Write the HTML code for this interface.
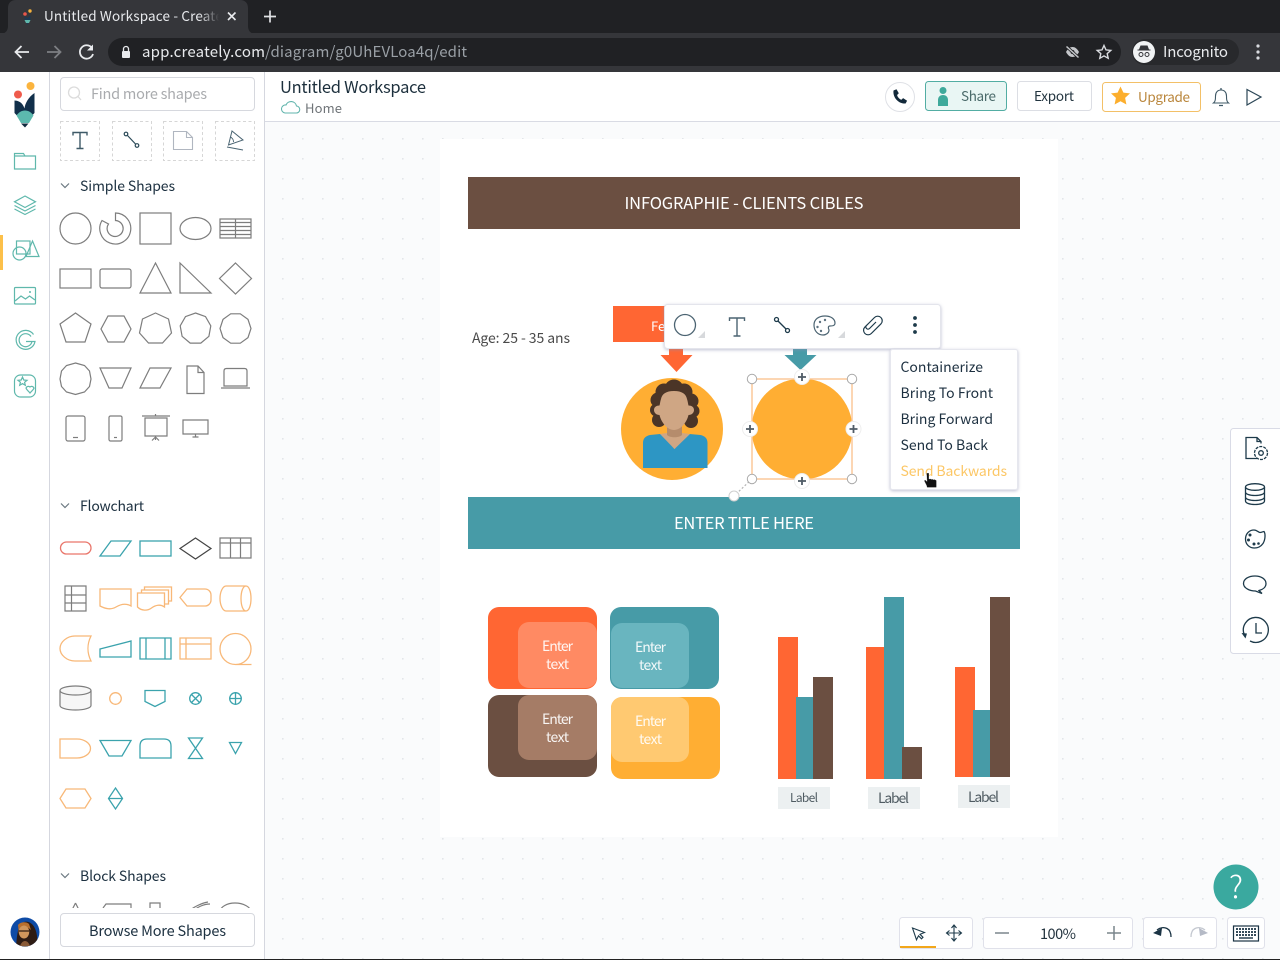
<!DOCTYPE html>
<html><head><meta charset="utf-8"><title>Untitled Workspace - Creately</title>
<style>
html,body{margin:0;padding:0;width:1280px;height:960px;overflow:hidden;background:#fff}
svg{display:block}
text{font-family:"Noto Sans CJK JP","Liberation Sans",sans-serif;}
.g{fill:none;stroke:#7d7d7d;stroke-width:1.2}
.o{fill:none;stroke:#f8b878;stroke-width:1.3}
.b{fill:none;stroke:#3ba3ad;stroke-width:1.3}
.n{fill:none;stroke:#2b4a58;stroke-width:1.2}
.m{fill:none;stroke:#5fb8ac;stroke-width:1.2}
.d{fill:none;stroke:#1d3a4a;stroke-width:1.3}
.menu{font-size:14px;fill:#1d3040}
</style></head><body>
<svg width="1280" height="960" viewBox="0 0 1280 960" xmlns="http://www.w3.org/2000/svg">
<defs>
<pattern id="dots" x="262" y="138" width="20" height="20" patternUnits="userSpaceOnUse"><rect x="0" y="0" width="1.6" height="1.6" fill="#e3e6e9"/></pattern>
<linearGradient id="fade" x1="0" x2="1" y1="0" y2="0"><stop offset="0" stop-color="#35363a" stop-opacity="0"/><stop offset="1" stop-color="#35363a"/></linearGradient>
<clipPath id="blockclip"><rect x="55" y="895" width="205" height="13"/></clipPath>
<clipPath id="feclip"><rect x="613" y="306" width="51" height="36"/></clipPath>
<clipPath id="avclip"><circle cx="25" cy="932" r="14.5"/></clipPath>
<filter id="sh" x="-10%" y="-10%" width="120%" height="125%"><feDropShadow dx="0" dy="1" stdDeviation="1.5" flood-color="#8a8fb0" flood-opacity=".55"/></filter>
</defs>

<!-- canvas -->
<rect x="265" y="122" width="1015" height="838" fill="#fafbfc"/>
<rect x="265" y="122" width="1015" height="838" fill="url(#dots)"/>
<rect x="440" y="139" width="618" height="698" fill="#fff"/>

<!-- browser chrome -->
<rect width="1280" height="34" fill="#202124"/>
<path d="M0 34C5 34 8 31 8 26V8C8 3 11 0 16 0H240C245 0 248 3 248 8V26C248 31 251 34 256 34Z" fill="#35363a"/>
<rect y="33" width="1280" height="39" fill="#35363a"/>
<circle cx="25" cy="14" r="1.8" fill="#e8574a"/><circle cx="30" cy="11" r="1.7" fill="#f5b13d"/>
<path d="M24.500 16l3 2 3-3v5h-6z" fill="#1c3a52"/><path d="M24.500 20h6l-1.500 3h-3z" fill="#5fb8ac"/><path d="M26.500 23h2l-1 2z" fill="#1c3a52"/>
<text x="44" y="21" font-size="13.5" fill="#e8eaed" textLength="190">Untitled Workspace - Creately</text>
<rect x="200" y="6" width="19" height="20" fill="url(#fade)"/><rect x="219" y="6" width="22" height="20" fill="#35363a"/>
<path d="M228 12.500l7.500 7.500M235.500 12.500l-7.500 7.500" stroke="#e8eaed" stroke-width="1.600"/>
<path d="M270 10.500v12M264 16.500h12" stroke="#e0e2e5" stroke-width="1.700"/>
<path d="M29 52H16M21.500 46l-6 6 6 6" fill="none" stroke="#e8eaed" stroke-width="1.800"/>
<path d="M47 52H60M54.500 46l6 6-6 6" fill="none" stroke="#7d7f83" stroke-width="1.800"/>
<path d="M92 48A6.700 6.700 0 1 0 93 54" fill="none" stroke="#e8eaed" stroke-width="1.800"/><path d="M93 44.500v6h-6z" fill="#e8eaed"/>
<rect x="108" y="38" width="1013" height="28" rx="14" fill="#202124"/>
<rect x="122" y="51" width="8" height="7" rx="1" fill="#e8eaed"/><path d="M123.500 51v-2a2.500 2.500 0 0 1 5 0v2" fill="none" stroke="#e8eaed" stroke-width="1.300"/>
<text x="142" y="57" font-size="15" fill="#e8eaed" textLength="123">app.creately.com</text>
<text x="265" y="57" font-size="15" fill="#9aa0a6" textLength="202">/diagram/g0UhEVLoa4q/edit</text>
<path d="M1066 52c2-3.500 4-5 6.500-5s4.500 1.500 6.500 5c-2 3.500-4 5-6.500 5s-4.500-1.500-6.500-5z" fill="#c5c7ca"/><circle cx="1072.500" cy="52" r="2" fill="#202124"/><path d="M1066.500 46.500l12 11" stroke="#202124" stroke-width="3"/><path d="M1066.500 46.500l12 11" stroke="#c5c7ca" stroke-width="1.500"/>
<path d="M1104 45.500l2 4.400 4.800.5-3.600 3.200 1 4.700-4.200-2.400-4.200 2.400 1-4.700-3.600-3.200 4.800-.5z" fill="none" stroke="#dadce0" stroke-width="1.400"/>
<rect x="1132" y="39" width="107" height="26" rx="13" fill="#28292c"/>
<circle cx="1144" cy="52" r="11" fill="#f1f3f4"/>
<path d="M1139 49.500l1.500-4h7l1.500 4z M1137.500 49.500h13v1h-13z" fill="#35363a"/><circle cx="1141" cy="54.500" r="2" fill="none" stroke="#35363a" stroke-width="1"/><circle cx="1147" cy="54.500" r="2" fill="none" stroke="#35363a" stroke-width="1"/>
<text x="1163" y="57" font-size="15" fill="#e8eaed" textLength="65">Incognito</text>
<circle cx="1258" cy="46" r="1.600" fill="#dadce0"/><circle cx="1258" cy="52" r="1.600" fill="#dadce0"/><circle cx="1258" cy="58" r="1.600" fill="#dadce0"/>

<!-- app header -->
<rect x="0" y="72" width="1280" height="50" fill="#fff"/>
<rect x="265" y="121" width="1015" height="1" fill="#d9dbe4"/>
<text x="280" y="93" font-size="16.500" fill="#1c2f3c" textLength="146">Untitled Workspace</text>
<path d="M285 113h11a3.500 3.500 0 0 0 .5-7 5.500 5.500 0 0 0-10.500-1 4 4 0 0 0-1 8z" fill="none" stroke="#62b5ad" stroke-width="1.100"/>
<text x="305" y="113" font-size="13" fill="#6f7478" textLength="37">Home</text>
<circle cx="900" cy="97" r="14.500" fill="#fff" stroke="#dfe1e6"/>
<path d="M893.500 90.500l3-1.200 2.300 4-1.700 1.700c.5 2.200 2.200 4 4.300 4.800l1.700-1.700 4 2.600-1.500 2.800c-7 .6-13-6-12.100-13z" fill="#12293a"/>
<rect x="925.500" y="81.500" width="81" height="29" rx="3" fill="#e9f6f4" stroke="#52ada3"/>
<circle cx="943" cy="90.500" r="3.500" fill="#3ea99b"/><path d="M938 106v-6c0-3 2-5 5-5s5 2 5 5v6z" fill="#3ea99b"/>
<text x="961" y="101" font-size="13.500" fill="#4a6a6a" textLength="35">Share</text>
<rect x="1017.500" y="81.500" width="74" height="29" rx="3" fill="#fff" stroke="#dcdee4"/>
<text x="1034" y="101" font-size="13.500" fill="#22343f" textLength="40">Export</text>
<rect x="1102.500" y="82.500" width="98" height="29" rx="3" fill="#fff" stroke="#f3c067"/>
<path d="M1120.500 86.500l2.900 6.100 6.600.8-4.900 4.500 1.300 6.600-5.900-3.300-5.900 3.300 1.300-6.600-4.900-4.500 6.600-.8z" fill="#fcae2d"/>
<text x="1138" y="102" font-size="13.500" fill="#b9853a" textLength="52">Upgrade</text>
<path d="M1213.500 103c2-1.500 2-4 2-7 0-3.500 2-6 5.500-6s5.500 2.500 5.500 6c0 3 0 5.500 2 7z" fill="none" stroke="#3e5866" stroke-width="1.100"/><path d="M1219 105.500h4M1221 88v2" stroke="#3e5866" stroke-width="1.300"/>
<path d="M1247 89.500l14 7.500-14 8z" fill="none" stroke="#2b4656" stroke-width="1.200"/>

<!-- left rail -->
<rect x="0" y="72" width="49" height="888" fill="#fff"/><rect x="49" y="72" width="1" height="888" fill="#d5d7df"/>
<rect x="50" y="72" width="214" height="888" fill="#fff"/><rect x="264" y="72" width="1" height="888" fill="#d5d7df"/>
<circle cx="30.500" cy="86" r="4" fill="#fbb43e"/><circle cx="18" cy="94.500" r="4" fill="#ef5b4c"/>
<path d="M14.500 100.500c3 0 6.500 1.500 8 4 .8 1.200 1.500 2.500 2 4 .5-5 4-11.500 10-15.500v20l-3 3h-14l-3-3z" fill="#112f4a"/>
<path d="M16.500 115.500c2-3 5-5 8.500-5s6.500 2 8.500 5l-4.500 7.500h-8z" fill="#5cb9ae"/><path d="M21 123.500h7.500L25 127.500z" fill="#102a3e"/>
<rect x="0" y="235" width="3" height="35" fill="#fcc04a"/>
<!-- rail icons -->
<path d="M14.500 169v-15.500h9l1.500 2.500h10.500v13z M14.500 156h10.500" class="m"/>
<path d="M25 196l10.500 5.800L25 207.500 14.500 201.800z M14.500 205.500l10.500 5.500 10.500-5.500 M14.500 209l10.500 5.500 10.500-5.500" class="m"/>
<rect x="16.500" y="241" width="13.500" height="13" class="m"/><circle cx="19.500" cy="253.500" r="6.500" fill="#fff" class="m"/><path d="M32.500 241l6.500 15.500h-13z" fill="#fff" class="m"/>
<rect x="14.500" y="287.500" width="21" height="16.500" rx="1" class="m"/><path d="M15 301l6-5 4.500 3 4-3 5.500 4" class="m"/><circle cx="30" cy="292" r="1" fill="#5fb8ac"/>
<path d="M33.500 334.500a9.500 9.500 0 1 0 1.500 7h-9M31 336.500a6.500 6.500 0 1 0 1 5" class="m"/>
<rect x="14.500" y="375" width="21" height="22" rx="6" class="m"/><path d="M22.500 377l1.300 3 3.200.3-2.400 2 .7 3-2.800-1.700-2.800 1.700.7-3-2.400-2 3.200-.3zM26 388c1-2 3-2 4-1 1-1 3-1 4 1-.5 2-2.500 3-4 5-1.500-2-3.500-3-4-5z" class="m" fill="#fff"/>
<circle cx="25" cy="932" r="14.500" fill="#0e4ba6"/>
<g clip-path="url(#avclip)">
<path d="M16 947c1-9 1-22 8-25 6-2 12 4 13 14l1 11z" fill="#2e1c14"/>
<path d="M18 925c2-3 8-4 11-1l2 6c-2-2-4-3-6-3-3 1-5 3-6 7z" fill="#b86f2e"/>
<ellipse cx="24" cy="932" rx="5.200" ry="6.500" fill="#d0965c"/>
<path d="M19 931h10" stroke="#2e1c14" stroke-width="1.200"/>
<path d="M20 946c1-3 3-5 5-5s4 2 5 5z" fill="#8a5a36"/>
</g>

<!-- shape panel top -->
<rect x="60.500" y="77.500" width="194" height="33" rx="3.500" fill="#fff" stroke="#d6d8de"/>
<circle cx="74" cy="92.500" r="5.500" fill="none" stroke="#dcdcdc" stroke-width="1.300"/><path d="M78 96.500l3 3.500" stroke="#dcdcdc" stroke-width="1.300"/>
<text x="91" y="99" font-size="14.500" fill="#a9abae" textLength="116">Find more shapes</text>
<g fill="none" stroke="#d6d6d6" stroke-dasharray="3 2.500"><rect x="60.500" y="121.500" width="39" height="39"/><rect x="112.500" y="121.500" width="39" height="39"/><rect x="163.500" y="121.500" width="39" height="39"/><rect x="215.500" y="121.500" width="39" height="39"/></g>
<path d="M73 135.500v-3h14v3M80 132.500v16M76.500 148.500h7" fill="none" stroke="#3f5a68" stroke-width="1.400"/>
<circle cx="126" cy="134" r="1.800" class="n"/><circle cx="137" cy="145.500" r="1.800" class="n"/><path d="M127.500 135.500l8 8.500" class="n"/>
<path d="M173.500 131.500h13l6 6v12h-19z M186.500 131.500v6h6" fill="none" stroke="#b0b6c0" stroke-width="1.100"/>
<path d="M232 131l11 9-14.500 5zM232 131l-3.500 14M227 147l16 3" fill="none" stroke="#4a6472" stroke-width="1"/><path d="M230 137a5 5 0 0 1 3.500 5" fill="none" stroke="#4a6472" stroke-width="1"/>

<!-- simple shapes -->
<path d="M61 183.500l4 4 4-4" fill="none" stroke="#6b7880" stroke-width="1.200"/>
<text x="80" y="191" font-size="14" fill="#1c3040" textLength="95">Simple Shapes</text>
<g class="g">
<circle cx="75.500" cy="228.500" r="15.500"/>
<path d="M115.500 213A15.500 15.500 0 1 1 102 220.500L108.500 224A8 8 0 1 0 115.500 220.500Z"/>
<rect x="140" y="213" width="31" height="31"/>
<ellipse cx="195.500" cy="228.500" rx="15.500" ry="11"/>
<path d="M220 219h31v19h-31zM220 222.500h31M220 226.500h31M220 230.500h31M220 234.500h31M235.500 219v19"/>
<rect x="60" y="269" width="31" height="19"/>
<rect x="100" y="269" width="31" height="19" rx="2"/>
<path d="M155.500 263l15.500 30h-31z"/>
<path d="M180 263l31 30h-31z"/>
<path d="M235.500 263l16 15.500-16 15.500-16-15.500z"/>
<path d="M75.500 313l15.500 11-6 18h-19l-6-18z"/>
<path d="M108 316h16l7 13-7 13h-16l-7-13z"/>
<path d="M155.500 313l13 6 3 14-9 10h-14l-9-10 3-14z"/>
<path d="M195.500 313L205.500 316.600 210.800 325.800 208.900 336.300 200.800 343.100H190.200L182.100 336.300 180.200 325.800 185.500 316.600Z"/>
<path d="M230.700 313.800H240.300L248 319.400 251 328.500 248 337.600 240.300 343.200H230.700L223 337.600 220 328.500 223 319.400Z"/>
<path d="M75.500 363l9 2.500 5 5.500 1.500 8-1.500 7.500-5 5.500-9 2.500-9-2.500-5-5.500-1.500-7.500 1.500-8 5-5.500z"/>
<path d="M100 368h31l-9 20h-13z"/>
<path d="M150 368h21l-11 20h-20z"/>
<path d="M187 366h11l6 6.500v21h-17zM198 366v6.500h6"/>
<path d="M224 371c0-1.500 1-2.500 2.500-2.500h18c1.500 0 2.500 1 2.500 2.500v15h-23zM221 388h29"/>
<rect x="66" y="416" width="19" height="25" rx="2"/><path d="M73 437.500h5"/>
<rect x="109" y="416" width="13" height="25" rx="1.500"/><path d="M114 437.500h3"/>
<path d="M145 418h22v18h-22zM142 416h28M155.500 414v2M155.500 436v4M155.500 437l-3.500 3.500M155.500 437l3.500 3.500"/>
<path d="M183 420h25v14h-25zM192.500 437h6M195.500 434v3"/>
</g>

<!-- flowchart -->
<path d="M61 503.500l4 4 4-4" fill="none" stroke="#6b7880" stroke-width="1.200"/>
<text x="80" y="511" font-size="14" fill="#1c3040" textLength="64">Flowchart</text>
<rect x="60.500" y="542" width="30.500" height="12" rx="6" fill="none" stroke="#e9766b" stroke-width="1.300"/>
<path d="M111 541h20l-11 15h-20z" class="b"/>
<rect x="140" y="541" width="31" height="15" class="b"/>
<path d="M195.500 538l15.500 10.500-15.500 10.500-15.500-10.500z" fill="none" stroke="#444" stroke-width="1.200"/>
<path d="M220 538h31v20h-31zM220 543h31M230.500 538v20M240.500 538v20" class="g"/>
<path d="M65 586h21v25h-21zM65 595h21M65 603h21M71.500 586v25" class="g"/>
<path d="M100 589h31v17c-5-3-10-2-15 1s-10 2-16-1z" class="o"/>
<path d="M140 593h27v14c-4-3-9-2-13 1s-10 3-14-1zM144 593v-3h27v14h-4M147 590v-3h27v14h-3" class="o" transform="translate(-2.500 0)"/>
<path d="M187 589h18a6 6 0 0 1 6 6v5a6 6 0 0 1-6 6h-18l-7-8.500z" class="o"/>
<path d="M226 586h20c3 0 5 5.500 5 12.500s-2 12.500-5 12.500h-20c-3 0-6-5.500-6-12.500s3-12.500 6-12.500zM246 586c-3 0-5 5.500-5 12.500s2 12.500 5 12.500" class="o"/>
<path d="M75 636h16c-4 8-4 17 0 25h-16c-8 0-15-6-15-12.500S67 636 75 636z" class="o"/>
<path d="M100 657v-8l31-8v16z" class="b"/>
<path d="M140 638h31v21h-31zM146 638v21M165 638v21" class="b"/>
<path d="M180 638h31v21h-31zM180 644h31M186 638v21" class="o"/>
<path d="M235.500 633.500a15.500 15.500 0 1 0 0 31h16M235.500 633.500a15.500 15.500 0 0 1 0 31" class="o"/>
<path d="M60 690.500c0-2.500 7-4.500 15.500-4.500s15.500 2 15.500 4.500v15c0 2.500-7 4.500-15.500 4.500s-15.500-2-15.500-4.500z" fill="#f6f6f6" stroke="#7d7d7d" stroke-width="1.200"/><path d="M60 690.500c0 2.500 7 4.500 15.500 4.500s15.500-2 15.500-4.500" class="g"/>
<circle cx="115.500" cy="698.500" r="5.800" class="o"/>
<path d="M145 690.500h20v11l-10 5-10-5z" class="b"/>
<circle cx="195.500" cy="698.500" r="5.800" class="b"/><path d="M191.500 694.500l8 8M199.500 694.500l-8 8" class="b"/>
<circle cx="235.500" cy="698.500" r="5.800" class="b"/><path d="M235.500 692.700v11.600M229.700 698.500h11.600" class="b"/>
<path d="M60 739h17c7 0 13.500 4 13.500 9.500S84 758 77 758H60z" class="o"/>
<path d="M100 740.500h31l-9 15.500h-13z" class="b"/>
<path d="M140 758v-12q0-7 7-7h17q7 0 7 7v12z" class="b"/>
<path d="M188.500 738h14l-14 20.500h14zM188.500 738l14 20.500" class="b"/>
<path d="M229.500 742.500h12l-6 11z" class="b"/>
<path d="M66 789h19l6 9.500-6 9.500h-19l-6-9.500z" class="o"/>
<path d="M115.500 788l7 10.500-7 10.500-7-10.500zM108.500 798.500h14" class="b"/>

<!-- block shapes -->
<path d="M61 873.500l4 4 4-4" fill="none" stroke="#6b7880" stroke-width="1.200"/>
<text x="80" y="881" font-size="14" fill="#1c3040" textLength="86">Block Shapes</text>
<g class="g" clip-path="url(#blockclip)">
<path d="M75.500 903l-4 8M75.500 903l4 8"/><path d="M103 908l3-4h25v8"/><path d="M150 912v-9h10v9"/><path d="M188 912c5-5 14-9 20-10M192 912c5-5 12-8 18-8"/><path d="M220 912c0-5 7-9 15-9s16 4 16 9"/>
</g>
<rect x="60.500" y="913.500" width="194" height="33" rx="3.500" fill="#fff" stroke="#d6d8de"/>
<text x="89" y="936" font-size="14.500" fill="#1c3040" textLength="137">Browse More Shapes</text>

<!-- infographic -->
<rect x="468" y="177" width="552" height="52" fill="#6b4f41"/>
<text x="624.500" y="209" font-size="16.500" fill="#fff" textLength="239">INFOGRAPHIE - CLIENTS CIBLES</text>
<text x="472" y="343" font-size="14" fill="#4a4a4a" textLength="98">Age: 25 - 35 ans</text>
<rect x="613" y="306" width="70" height="36" fill="#ff6633"/>
<text x="651" y="331" font-size="13" fill="#fff" clip-path="url(#feclip)">Femme</text>
<path d="M669 345h14v10h9.500l-16 17-16-17h8.500z" fill="#ff6633"/>
<path d="M793 345h14v10h9.500l-16 15-16-15h8.500z" fill="#479ba7"/>
<circle cx="672" cy="429" r="51" fill="#ffae33"/>
<!-- person -->
<g fill="#4b3527">
<circle cx="674" cy="389" r="9.500"/><circle cx="664" cy="392" r="8.500"/><circle cx="684" cy="392" r="8.500"/>
<circle cx="658" cy="400" r="7.500"/><circle cx="691" cy="401" r="7.500"/>
<circle cx="656.500" cy="410" r="6.500"/><circle cx="693" cy="411" r="6.500"/>
<circle cx="659" cy="420" r="7"/><circle cx="691" cy="421" r="7"/>
<rect x="660" y="392" width="30" height="25"/>
</g>
<path d="M643 468v-25c0-5 3-7 7-8l10-1c5 1 10 10 14.500 15 5-6 10-14 15-15l11 1c4 1 7 3 7 8v25z" fill="#2d96c4"/>
<path d="M660 434l7-1h15l8 1-15.500 15z" fill="#cfa684"/>
<path d="M667 422h15v13c-3 3-12 3-15 0z" fill="#b58c6c"/>
<path d="M674 391c8 0 12 3 13 8 1 3 1 5 1.500 6.500 3 0 5.500 1.500 5.500 4.500s-2.500 5-5.500 5c-2 8-8 15-14.500 15s-12.500-7-14.500-15c-3 0-5.500-2-5.500-5s2.500-4.500 5.500-4.500c.5-1.500.5-3.500 1.500-6.500 1-5 5-8 13-8z" fill="#cfa684"/>
<rect x="468" y="497" width="552" height="52" fill="#479ba7"/>
<text x="674" y="529" font-size="16.500" fill="#fff" textLength="140">ENTER TITLE HERE</text>

<circle cx="802" cy="429" r="50.500" fill="#ffae33"/>
<rect x="752" y="379" width="100" height="100" fill="none" stroke="#fbc89a" stroke-width="1.500"/>
<path d="M752 479l-18 17" stroke="#b5b5b5" stroke-width="1.200" stroke-dasharray="2 2"/>
<g fill="#fff" stroke="#a9a9a9" stroke-width="1"><circle cx="752" cy="379" r="4.700"/><circle cx="852" cy="379" r="4.700"/><circle cx="752" cy="479" r="4.700"/><circle cx="852" cy="479" r="4.700"/></g>
<circle cx="734" cy="496" r="5" fill="#fff" stroke="#cfcfcf"/>
<g fill="#fff" stroke="#eeeeee" stroke-width="1"><circle cx="802" cy="377" r="7.500"/><circle cx="750" cy="429" r="7.500"/><circle cx="853.500" cy="429" r="7.500"/><circle cx="802" cy="481" r="7.500"/></g>
<path d="M798 377h8M802 373v8M746 429h8M750 425v8M849.500 429h8M853.500 425v8M798 481h8M802 477v8" stroke="#4f5b66" stroke-width="1.800"/>

<!-- floating toolbar -->
<rect x="664.500" y="304.500" width="276" height="44" rx="3" fill="#fff" stroke="#e4e5ec" filter="url(#sh)"/>
<circle cx="685" cy="325" r="10.500" fill="none" stroke="#4c6472" stroke-width="1.300"/>
<path d="M705 331v7h-7z" fill="#d7d9dc"/>
<path d="M729.500 321v-3h15v3M737 318v18M733.500 336h7" fill="none" stroke="#4c6472" stroke-width="1.400"/>
<circle cx="776.500" cy="319.500" r="2" class="d"/><circle cx="787.500" cy="330.500" r="2" class="d"/><path d="M778 321l8 8" class="d"/>
<path d="M825 316c6 0 10 3 10 7 0 3-3 3-5 3s-2 2-1 4c0 3-3 5-6 5-5 0-9-4-9-10s5-9 11-9z" fill="none" stroke="#4c6472" stroke-width="1.200"/>
<g fill="#5d7280"><circle cx="820" cy="322" r="1.200"/><circle cx="817.500" cy="327" r="1.200"/><circle cx="821" cy="331" r="1.200"/><circle cx="825" cy="320" r="1.200"/></g>
<path d="M845 331v7h-7z" fill="#d7d9dc"/>
<path d="M876 322l-6.500 6.500a2 2 0 0 1-3-3l8-8a4.500 4.500 0 0 1 6.400 6.400l-9.600 9.600a4.500 4.500 0 0 1-6.400-6.400l3-3" fill="none" stroke="#1d3a4a" stroke-width="1.200"/>
<circle cx="915" cy="318" r="1.900" fill="#1d3a4a"/><circle cx="915" cy="325" r="1.900" fill="#1d3a4a"/><circle cx="915" cy="332" r="1.900" fill="#1d3a4a"/>

<!-- context menu -->
<rect x="890.500" y="349.500" width="127" height="140" rx="2" fill="#fff" stroke="#e6e7ee" filter="url(#sh)"/>
<text class="menu" x="900.500" y="372" textLength="82.500">Containerize</text>
<text class="menu" x="900.500" y="398" textLength="92.500">Bring To Front</text>
<text class="menu" x="900.500" y="424" textLength="92.500">Bring Forward</text>
<text class="menu" x="900.500" y="450" textLength="87.500">Send To Back</text>
<text class="menu" x="900.500" y="476" textLength="106.500" style="fill:#fcc766">Send Backwards</text>
<path d="M926.500 473h2.500v6l1.500-.3.500.6 1.500-.3.500.6 1.500-.2 2 1v7.100h-9.500l-.5-2-2.500-5 1.500-.5 1.500 1.500z" fill="#111" stroke="#fff" stroke-width=".3"/>

<!-- blocks -->
<rect x="488" y="607" width="109" height="82" rx="11" fill="#ff6633"/>
<rect x="518" y="622" width="79" height="66" rx="11" fill="#ff8a63"/>
<rect x="610" y="607" width="109" height="82" rx="11" fill="#479ba7"/>
<rect x="611" y="623" width="78" height="65" rx="11" fill="#69b5bf"/>
<rect x="488" y="695" width="109" height="82" rx="11" fill="#6b4f41"/>
<rect x="518" y="695" width="79" height="65" rx="11" fill="#a57c66"/>
<rect x="611" y="697" width="109" height="82" rx="11" fill="#ffae33"/>
<rect x="611" y="697" width="78" height="65" rx="11" fill="#ffc971"/>
<g font-size="14" fill="#fff" fill-opacity=".92" text-anchor="middle">
<text x="557.500" y="651" textLength="31">Enter</text><text x="557.500" y="669" textLength="23">text</text>
<text x="650.500" y="652" textLength="31">Enter</text><text x="650.500" y="670" textLength="23">text</text>
<text x="557.500" y="724" textLength="31">Enter</text><text x="557.500" y="742" textLength="23">text</text>
<text x="650.500" y="726" textLength="31">Enter</text><text x="650.500" y="744" textLength="23">text</text>
</g>

<!-- bars -->
<rect x="778" y="637" width="20" height="142" fill="#ff6633"/><rect x="796" y="697" width="17" height="82" fill="#479ba7"/><rect x="813" y="677" width="20" height="102" fill="#6b4f41"/>
<rect x="866" y="647" width="18" height="132" fill="#ff6633"/><rect x="884" y="597" width="20" height="182" fill="#479ba7"/><rect x="902" y="747" width="20" height="32" fill="#6b4f41"/>
<rect x="955" y="667" width="20" height="110" fill="#ff6633"/><rect x="973" y="710" width="17" height="67" fill="#479ba7"/><rect x="990" y="597" width="20" height="180" fill="#6b4f41"/>
<rect x="778" y="787" width="52" height="22" fill="#ecf0f1"/><rect x="868" y="787" width="52" height="22" fill="#ecf0f1"/><rect x="958" y="785" width="52" height="23" fill="#ecf0f1"/>
<g fill="#4f5b62" text-anchor="middle"><text x="804" y="802" font-size="12" textLength="28">Label</text><text x="893.500" y="803" font-size="14" textLength="31">Label</text><text x="983.500" y="802" font-size="14" textLength="31">Label</text></g>

<!-- right panel -->
<rect x="1230.500" y="428.500" width="60" height="225" rx="3" fill="#fff" stroke="#d9dbe6"/>
<path d="M1257 458.500h-11v-21h11l4 4v2" class="d" stroke-width="1.100"/><path d="M1257 437.500v4h4" class="d" stroke-width="1.100"/>
<circle cx="1261" cy="453" r="6.500" class="d" stroke-width="1.100" stroke-dasharray="3 1.100"/><circle cx="1261" cy="453" r="2.300" class="d" stroke-width="1"/>
<ellipse cx="1255" cy="487" rx="9.500" ry="3.300" class="d" stroke-width="1.100"/><path d="M1245.500 487v14c0 2 4 3.500 9.500 3.500s9.500-1.500 9.500-3.500v-14M1245.500 492c0 2 4 3.500 9.500 3.500s9.500-1.500 9.500-3.500M1245.500 497c0 2 4 3.500 9.500 3.500s9.500-1.500 9.500-3.500" class="d" stroke-width="1.100"/>
<path d="M1254 530c3 0 4.500 2.500 6 2.500s3-1 4-1c1.500 2 1.500 8-1 12-2 3-5.500 4.500-8.500 4.500-5 0-9-3.500-9-9s4-9 8.500-9z" class="d" stroke-width="1.200"/>
<g fill="#1d3a4a"><circle cx="1250" cy="535" r="1.500"/><circle cx="1248.500" cy="540" r="1.500"/><circle cx="1254" cy="544" r="1.500"/><circle cx="1258.500" cy="543.500" r="1.300"/></g>
<path d="M1255 576c6 0 11 3 11 7.500 0 3.500-3 6-7 7l3 3-6.500-2.500c-6 0-12-3-12-7.500s5-7.500 11.500-7.500z" class="d" stroke-width="1.100"/>
<path d="M1244 634A12.500 12.500 0 1 1 1250 641" class="d" stroke-width="1.200"/><path d="M1241.500 633l5.500 .5-1.500 5z" fill="#1d3a4a"/><path d="M1256 623v10h6" class="d" stroke-width="1.200"/>

<!-- help -->
<circle cx="1236" cy="887" r="22.500" fill="#3aa99f"/>
<text x="1236" y="898" font-size="31" fill="#fff" text-anchor="middle" style="font-weight:200">?</text>

<!-- bottom tools -->
<rect x="899.500" y="917.500" width="73" height="31" rx="3" fill="#fff" stroke="#e0e1ea"/>
<rect x="900" y="946" width="36" height="2" fill="#f2a71b"/>
<path d="M912.500 928l12 4.500-4.500 1.800 3 3-1.500 1.500-3-3-2 4z" fill="none" stroke="#1d3a4a" stroke-width="1.100"/>
<path d="M954 925.500v15M946.500 933h15M951.500 928l2.500-3 2.500 3M951.500 938l2.500 3 2.500-3M949.500 930.500l-3 2.500 3 2.500M958.500 930.500l3 2.500-3 2.500" fill="none" stroke="#1d3a4a" stroke-width="1.100"/>
<rect x="983.500" y="917.500" width="149" height="31" rx="3" fill="#fff" stroke="#e0e1ea"/>
<path d="M995 933h14" stroke="#7a858c" stroke-width="1.500"/><path d="M1107 933h14M1114 926v14" stroke="#7a858c" stroke-width="1.500"/>
<text x="1040" y="939" font-size="14.500" fill="#24343f" textLength="36">100%</text>
<rect x="1143.500" y="917.500" width="73" height="31" rx="3" fill="#fff" stroke="#e0e1ea"/>
<path d="M1157 930c3-2.500 7-3 10-1.500 3 1.500 4 5 4 8.500" fill="none" stroke="#1a3344" stroke-width="1.300"/><path d="M1153 933l9-5 -1 8z" fill="#1a3344"/>
<path d="M1205 930c-3-2.500-7-3-10-1.500-3 1.500-4 5-4 8.500" fill="none" stroke="#c4c8d0" stroke-width="1.300"/><path d="M1208 933l-9-5 1 8z" fill="#b5bac6"/>
<rect x="1227.500" y="917.500" width="37" height="31" rx="3" fill="#fff" stroke="#e0e1ea"/>
<rect x="1233.500" y="926" width="25" height="15" fill="none" stroke="#1a3344" stroke-width="1.200"/>
<path d="M1236 929h20M1236 932h20M1236 935h20" stroke="#1a3344" stroke-width="1.800" stroke-dasharray="2 1"/><path d="M1239 938h14" stroke="#1a3344" stroke-width="1.400"/>

<rect x="0" y="959" width="1280" height="1" fill="#222"/>
</svg>
</body></html>
